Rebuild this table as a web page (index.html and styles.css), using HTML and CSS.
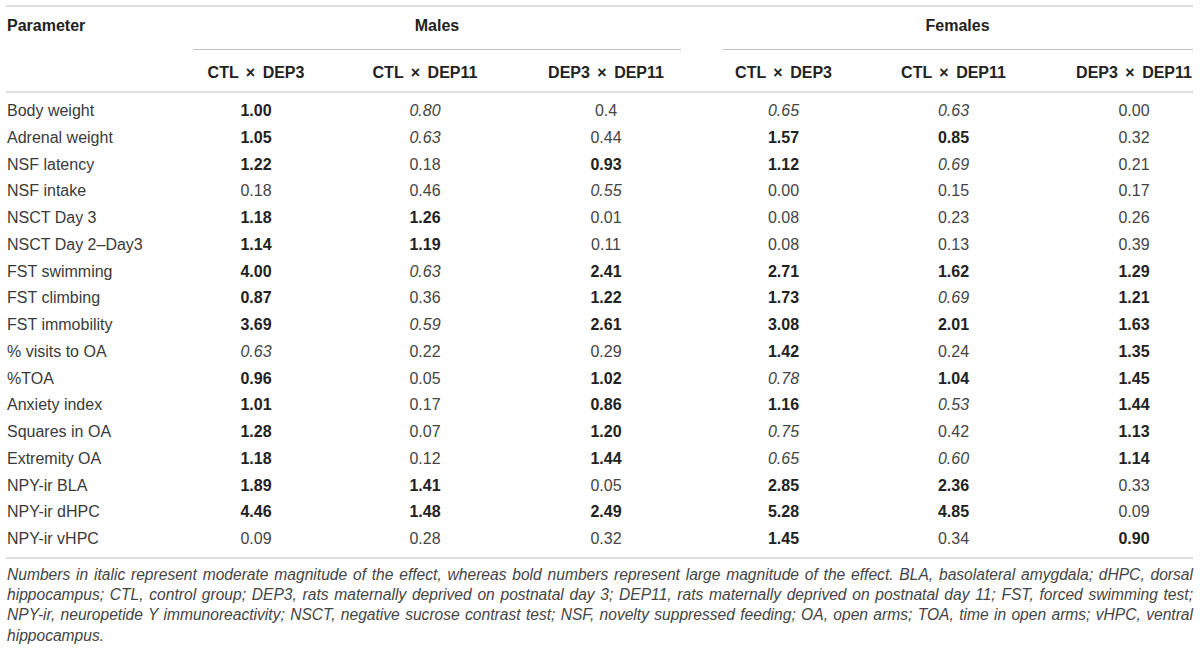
FILE: index.html
```html
<!DOCTYPE html>
<html lang="en">
<head>
<meta charset="utf-8">
<title>Effect sizes</title>
<link rel="stylesheet" href="styles.css">
</head>
<body>
<div class="wrap">
<table class="data">
<colgroup>
<col class="c-param"><col class="c-m1"><col class="c-m2"><col class="c-m3"><col class="c-gap"><col class="c-f1"><col class="c-f2"><col class="c-f3">
</colgroup>
<thead>
<tr class="h1">
<th class="param" rowspan="2">Parameter</th>
<th class="group" colspan="3">Males</th>
<th class="gap"></th>
<th class="group" colspan="3">Females</th>
</tr>
<tr class="h2">
<th>CTL × DEP3</th><th>CTL × DEP11</th><th>DEP3 × DEP11</th><th class="gap"></th><th>CTL × DEP3</th><th>CTL × DEP11</th><th class="last">DEP3 × DEP11</th>
</tr>
</thead>
<tbody>
<tr><td>Body weight</td><td class="b">1.00</td><td class="i">0.80</td><td>0.4</td><td></td><td class="i">0.65</td><td class="i">0.63</td><td class="last">0.00</td></tr>
<tr><td>Adrenal weight</td><td class="b">1.05</td><td class="i">0.63</td><td>0.44</td><td></td><td class="b">1.57</td><td class="b">0.85</td><td class="last">0.32</td></tr>
<tr><td>NSF latency</td><td class="b">1.22</td><td>0.18</td><td class="b">0.93</td><td></td><td class="b">1.12</td><td class="i">0.69</td><td class="last">0.21</td></tr>
<tr><td>NSF intake</td><td>0.18</td><td>0.46</td><td class="i">0.55</td><td></td><td>0.00</td><td>0.15</td><td class="last">0.17</td></tr>
<tr><td>NSCT Day 3</td><td class="b">1.18</td><td class="b">1.26</td><td>0.01</td><td></td><td>0.08</td><td>0.23</td><td class="last">0.26</td></tr>
<tr><td>NSCT Day 2–Day3</td><td class="b">1.14</td><td class="b">1.19</td><td>0.11</td><td></td><td>0.08</td><td>0.13</td><td class="last">0.39</td></tr>
<tr><td>FST swimming</td><td class="b">4.00</td><td class="i">0.63</td><td class="b">2.41</td><td></td><td class="b">2.71</td><td class="b">1.62</td><td class="last b">1.29</td></tr>
<tr><td>FST climbing</td><td class="b">0.87</td><td>0.36</td><td class="b">1.22</td><td></td><td class="b">1.73</td><td class="i">0.69</td><td class="last b">1.21</td></tr>
<tr><td>FST immobility</td><td class="b">3.69</td><td class="i">0.59</td><td class="b">2.61</td><td></td><td class="b">3.08</td><td class="b">2.01</td><td class="last b">1.63</td></tr>
<tr><td>% visits to OA</td><td class="i">0.63</td><td>0.22</td><td>0.29</td><td></td><td class="b">1.42</td><td>0.24</td><td class="last b">1.35</td></tr>
<tr><td>%TOA</td><td class="b">0.96</td><td>0.05</td><td class="b">1.02</td><td></td><td class="i">0.78</td><td class="b">1.04</td><td class="last b">1.45</td></tr>
<tr><td>Anxiety index</td><td class="b">1.01</td><td>0.17</td><td class="b">0.86</td><td></td><td class="b">1.16</td><td class="i">0.53</td><td class="last b">1.44</td></tr>
<tr><td>Squares in OA</td><td class="b">1.28</td><td>0.07</td><td class="b">1.20</td><td></td><td class="i">0.75</td><td>0.42</td><td class="last b">1.13</td></tr>
<tr><td>Extremity OA</td><td class="b">1.18</td><td>0.12</td><td class="b">1.44</td><td></td><td class="i">0.65</td><td class="i">0.60</td><td class="last b">1.14</td></tr>
<tr><td>NPY-ir BLA</td><td class="b">1.89</td><td class="b">1.41</td><td>0.05</td><td></td><td class="b">2.85</td><td class="b">2.36</td><td class="last">0.33</td></tr>
<tr><td>NPY-ir dHPC</td><td class="b">4.46</td><td class="b">1.48</td><td class="b">2.49</td><td></td><td class="b">5.28</td><td class="b">4.85</td><td class="last">0.09</td></tr>
<tr><td>NPY-ir vHPC</td><td>0.09</td><td>0.28</td><td>0.32</td><td></td><td class="b">1.45</td><td>0.34</td><td class="last b">0.90</td></tr>
</tbody>
</table>
<p class="note">
<span class="ln">Numbers in italic represent moderate magnitude of the effect, whereas bold numbers represent large magnitude of the effect. BLA, basolateral amygdala; dHPC, dorsal</span>
<span class="ln">hippocampus; CTL, control group; DEP3, rats maternally deprived on postnatal day 3; DEP11, rats maternally deprived on postnatal day 11; FST, forced swimming test;</span>
<span class="ln">NPY-ir, neuropetide Y immunoreactivity; NSCT, negative sucrose contrast test; NSF, novelty suppressed feeding; OA, open arms; TOA, time in open arms; vHPC, ventral</span>
<span class="ln end">hippocampus.</span>
</p>
</div>
</body>
</html>
```
FILE: styles.css
```css
html, body {
  margin: 0;
  padding: 0;
  background: #ffffff;
}

.wrap {
  padding: 5px 7px 0 6px;
  width: 1187px;
  font-family: "Liberation Sans", Arial, Helvetica, sans-serif;
  color: #444;
}

.data {
  width: 1187px;
  border-collapse: collapse;
  table-layout: fixed;
  border-top: 2px solid #dedede;
  border-bottom: 2px solid #dedede;
  font-size: 16px;
}

.c-param { width: 187px; }
.c-m1 { width: 126px; }
.c-m2 { width: 212px; }
.c-m3 { width: 150px; }
.c-gap { width: 41px; }
.c-f1 { width: 123px; }
.c-f2 { width: 217px; }
.c-f3 { width: 131px; }

.data th {
  font-weight: bold;
  color: #222;
  text-align: center;
  line-height: 18px;
  padding: 0;
  white-space: nowrap;
  word-spacing: 3px;
}

.data .h1 th {
  padding-top: 10px;
  padding-bottom: 14px;
}

.data .h1 th.param {
  text-align: left;
  vertical-align: top;
  padding-left: 1px;
  border-bottom: 2px solid #dedede;
}

.data .h1 th.group {
  border-bottom: 1px solid #c4c4c4;
}

.data .h2 th {
  padding-top: 14px;
  padding-bottom: 9px;
  border-bottom: 2px solid #dedede;
}

.data th.last,
.data td.last {
  padding-left: 13px;
}

.data td {
  text-align: center;
  line-height: 18.75px;
  padding: 4px 0;
  white-space: nowrap;
}

.data td:first-child {
  text-align: left;
  padding-left: 1px;
  color: #3a3a3a;
}

.data tbody tr:first-child td {
  padding-top: 9px;
}

.data tbody tr:last-child td {
  padding-bottom: 8px;
}

.data td.b {
  font-weight: bold;
  color: #222;
}

.data td.i {
  font-style: italic;
}

.note {
  margin: 6px 0 0 1px;
  font-size: 15.6px;
  font-style: italic;
  line-height: 20.3px;
  color: #444;
}

.note .ln {
  display: block;
  text-align: justify;
  text-align-last: justify;
  white-space: nowrap;
}

.note .ln.end {
  text-align-last: left;
}
```
